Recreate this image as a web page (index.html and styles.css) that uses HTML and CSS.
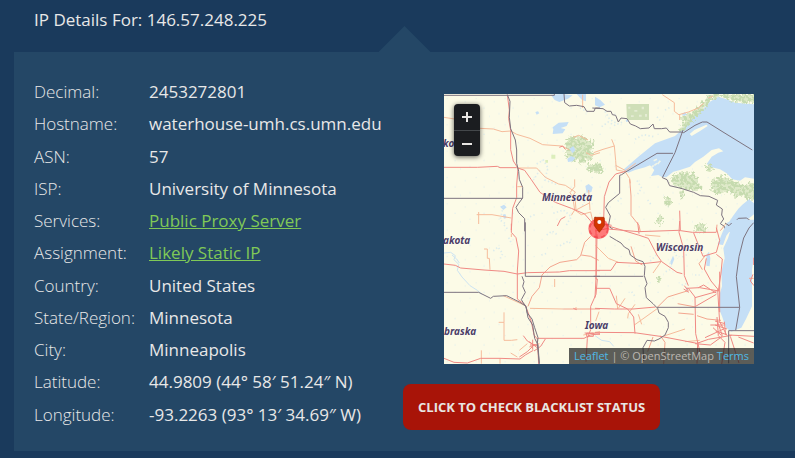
FILE: index.html
```html
<!DOCTYPE html>
<html lang="en">
<head>
<meta charset="utf-8">
<title>IP Details For: 146.57.248.225</title>
<meta name="viewport" content="width=device-width, initial-scale=1">
<link rel="stylesheet" href="styles.css">
</head>
<body>
<h1 class="title">IP Details For: 146.57.248.225</h1>
<main class="panel">
  <dl class="details">
    <dt>Decimal:</dt><dd>2453272801</dd>
    <dt>Hostname:</dt><dd>waterhouse-umh.cs.umn.edu</dd>
    <dt>ASN:</dt><dd>57</dd>
    <dt>ISP:</dt><dd>University of Minnesota</dd>
    <dt>Services:</dt><dd><a href="#proxy">Public Proxy Server</a></dd>
    <dt>Assignment:</dt><dd><a href="#static">Likely Static IP</a></dd>
    <dt>Country:</dt><dd>United States</dd>
    <dt>State/Region:</dt><dd>Minnesota</dd>
    <dt>City:</dt><dd>Minneapolis</dd>
    <dt>Latitude:</dt><dd>44.9809 (44° 58′ 51.24″ N)</dd>
    <dt>Longitude:</dt><dd>-93.2263 (93° 13′ 34.69″ W)</dd>
  </dl>
  <div class="side">
    <div class="map">
      <svg class="tiles" viewBox="0 0 930 810" aria-hidden="true">
        <defs>
          <pattern id="lakes" width="87" height="79" patternUnits="userSpaceOnUse">
            <path d="M8 12h3v3h-3zM31 40h5v3h-5zM62 21h3v4h-3zM48 66h3v3h-3zM76 58h4v3h-4z" fill="#cfe5f0" opacity=".55"/>
          </pattern>
          <filter id="ragged" x="-10%" y="-10%" width="120%" height="120%">
            <feTurbulence type="fractalNoise" baseFrequency=".12" numOctaves="2" seed="4" result="noise"/>
            <feDisplacementMap in="SourceGraphic" in2="noise" scale="26" xChannelSelector="R" yChannelSelector="G" result="edge"/>
            <feColorMatrix in="noise" values="0 0 0 0 1  0 0 0 0 1  0 0 0 0 .9  0 0 9 0 -4.2" result="clearings"/>
            <feComposite in="edge" in2="clearings" operator="out" result="dense"/>
            <feComponentTransfer in="edge" result="thin"><feFuncA type="linear" slope=".55"/></feComponentTransfer>
            <feMerge><feMergeNode in="thin"/><feMergeNode in="dense"/></feMerge>
          </filter>
        </defs>
        <rect width="930" height="810" fill="#fcfbe7"/>
        <rect width="930" height="810" fill="url(#lakes)"/>

        <!-- North-west: Minnesota and the Dakotas -->
        <g transform="translate(-12 -12)">
          <path class="woods" d="M378 165l6-24 18-4 6 8 20-10 10 14 18 2 4 20-10 8 12 14-10 16-18-2-2 14-16-2-4-12-14 8-6-16-16 4 2-18zM438 232l12-10 18 4 12-8v28l-26-2-14-4z"/>
          <path class="water" d="M332 14l36-2 30 4-14 10-26 10-14-6zM338 112l18-14 30-2-6 12-18 6 14 4-8 12-30 2 2-14zM388 176l12-8 6 12-8 10zM382 206l12-8 12 6-8 10-14 2zM436 288l10-6 12 10-4 14-14 2zM410 12h28v22l-12-4zM286 66l8-2 4 6-8 4zM180 350l12-6 8 8-10 8zM188 374l8-2 4 12-8 2z"/>
          <path d="M334 194h12v12h-12zM316 210h8v8h-8z" fill="#dceebb"/>
          <path class="lake-dust" d="M290 222l20-12 14 24-10 36 38 14M190 350l-10 40 20 14M340 370l30-10 24 20-18 30M410 320l26 8-10 22M420 54l24 12M270 380l20-8M300 240l-20 30"/>
          <path class="minor" d="M12 82l38 6M120 115l40 2 26 8 26-2 18 10 40 12 38 19 58 4 22 12M400 142l16-6 28 14M438 188l16 8 26-8M232 234h58l26 28 40 20 20 4 30 20-8 12 6 42-10 16M404 268v22l-14 18 16 26 2 26 42-22M116 366v36M110 374h46l58 10M232 290h16M404 360l20 14 28-8 8 34M428 14v40M446 300l4 60"/>
          <path class="major" d="M202 14l6 46-2 26 6 35v58l8 34 14 22-4 50v38l-12 32-4 65M12 232h100l60-3 8 4h50l24 8 20 28 26 38 46 30 48 18 40 17 26 30 20 18M352 408l10-20 14-8M358 172l10-4 8 10"/>
          <path class="border" d="M12 16h331v-4M372 12l2 26 14 10 22-2 22 4 8 14 22 0 4-10 14 0M12 325h235M202 14l8 20-2 48 4 34 14 34 4 30v40l6 24 2 24 10 24v32l-12 16-8 12 8 16 18 18v38"/>
        </g>

        <!-- North-east: Lake Superior and Ontario -->
        <g transform="translate(453 -12)">
          <path d="M94 42h68v48h-66z" fill="#cfdfb8"/>
          <path d="M100 50h6v6h-6zM118 60h9v5h-9zM140 50h7v8h-7zM108 76h8v5h-8zM132 74h8v6h-8zM150 72h6v8h-6z" fill="#e4ecd3"/>
          <path class="water" d="M84 240L130 200 180 160 240 138 262 118 285 90 318 64 345 35 370 20 395 28 420 38 490 44V268L450 262 435 272 412 268 395 250 375 238 350 232 335 222 350 200 370 188 385 184 372 175 350 180 325 200 300 216 285 230 255 240 235 245 214 262 202 262 190 255 168 258 178 240 165 226 150 232 120 240 100 248z"/>
          <path d="M284 132l14-12 36-16 4 4-24 16-24 14z" fill="#fcfbe7"/>
          <path class="woods" d="M340 12h150v28l-70-4-24-12-24-6-24 14-20 20-14 14-14 24-14 4 10-30 14-14 20-20zM330 30l12 6-22 30-28 26-20 26-22 4 14-22-6-22 26-8 28-8z"/>
          <path class="woods" d="M-4 224l24-6 4 34-28-2zM208 322h20v24h-20zM184 384l12-8 10 8-10 18-14 4z"/>
          <path class="woods" d="M226 262l22-12 24-4 24 6 18 12-4 14 10 14-14 10-26-4-22-4-26-12zM254 302l14 4-4 22-12-8zM332 232l14-12 8 18-12 10zM346 274l22-14 26-2 20 16 22 4 12 12 22-14 16 10v44l-30 0-14-14-20 8-20-20-34 8-18-10z"/>
          <path class="water" d="M396 406l18-28 16-22 12-12 20-16 18 14v28l-24 20-20 24-18 12h-24zM0 20l16 10 14 14-16 8-14-6zM92 90l6-2 4 6-8 2zM260 72l10-6 6 8-10 4z"/>
          <path class="lake-dust" d="M20 110l20-14 18 10 30-12M120 148l26-14 30 6M30 64l14 24 24 14M126 272l14 22-12 18M68 334l14-12M158 330l12 16M186 80l10 12M210 60l20-10"/>
          <path d="M168 234l8-8M178 226l8-6M188 222l8-10M176 212l10-4" fill="none" stroke="#f2f5e8" stroke-width="5"/>
          <path class="minor" d="M202 14l36 24v26l16 12 0 14M252 74l28-8 30-12 16-14M-4 188l28-10 34-10-8-20M58 168l4 44 2 28 22 4M62 226l30 16 30-22M90 244l14 22 2 14M384 410l8-8M340 24l14-6"/>
          <path class="major" d="M92 244l-30 8-20 24-14 44-2 72-10 26M254 362l2 58M20 400l30 6"/>
          <path class="medium" d="M104 268l4 50v58l24 30 4 20M366 404l-2 22M386 410l-10 12"/>
          <path class="border" d="M-8 54l32 2 12 8 12 0 4 10 10 2 8 20 8-12 18 2 10 16 16 6 14 8 26-2 12-12 4 14 22 0 14-2 10 12h34l8 2 34-22 22-10 14 0 48 30 88 54M264 120l-24 68-38 75 14 6 8 18 34 8 38 12 20 10 26 2 26 12-4 14 18 12-2 18 6 12-10 14 12 8 4 14 6-2 10-14 22-22 24-1 22 14M234 190h-48l-94 56-12 8-6 2v54l-34 28-8 14 14 26-6 30 14 10M477 400l-12 20"/>
        </g>

        <!-- South-west: Nebraska and Iowa -->
        <g transform="translate(-12 393)">
          <path class="river" d="M12 84l20-2 14 10-4 12 14 14-4 18 14 20 24 26 22 14 14 12M36 90l14 12 8 12"/>
          <path class="lake-dust" d="M160 78l14-12 14 20-8 16M206 38l10 20M192 0l12 14M320 30l16-12 14 10M360 62l26-14 8 10M304 90l20-6"/>
          <path class="minor" d="M214 26v10M132 72h10v28h6l2 34M344 162v24M270 250l100 2M408 246v8M176 292h16v54h22l18-2M192 262v30M124 376v40M180 400v16M238 376l24-20M430 330l50-10M212 384l20 12M190 212l44 20 18 8"/>
          <path class="medium" d="M264 244l12-30 22-26 8-38 24-24 30-14 50-8 14-14 28 4 24 12M422 92l12-40 18-18M268 366l30-10M370 252h110"/>
          <path class="major" d="M12 117l34 4 16 8 70 6 60 4 40 8 30-4 96-2 30-4h92M214-4v26l14 16 8 40-4 60v84l24 18 18 50 8 40 10 12 4 75M12 400l30 12 40 2 40-14h58l60 2 16-12 24-14M292 340h140l20-10 28-4M468 0v162l4 0-4 46-16 36v70l-10 26-4 70M250 332l12 16 16 10 16 4M316 342l-14 22-20 14M238 396l24-16 22-22M400 250l10 4M434 324l46 4"/>
          <path class="major" d="M268 350l26 20M270 360h22M278 344v30M440 324h20v10h-20z"/>
          <path class="border" d="M12 202h104l36 18 8-6 40-2 20 10 20 10 18 12 4 20 14 18 8 26 10 30-2 18 6 60M256-8v162h224M246 154l6 16-4 14 8 18-12 22 14 22 6 32 14 22 6 40 10 20 4 56"/>
        </g>

        <!-- South-east: Wisconsin and Lake Michigan -->
        <g transform="translate(453 393)">
          <path class="woods" d="M302-2h30v22l-16 4-18-10zM188 152l8 4-2 20-10-10z"/>
          <path class="water" d="M416-16h61v110l-6 40 0 110-18 38-14 26-30 12-16-12-12-34-8-20 2-50 6-20-2-44 10-40-4-30 14-30zM368 58l16-40 14-26 28-8-14 24-18 24-10 28zM334 90l8-10 4 20-2 24-10-2zM272 186l8 4-4 8zM226 110l8-18 4 10-8 20z"/>
          <path class="lake-dust" d="M212 140l16-8-4-24M238 80l10 20M262 96l20-10M184 90l-20 20M110 200l10 14M260 180l20-6M330 96l-6-12M300 150l14 0"/>
          <path class="river" d="M0 332l20 14 24 4 12 14"/>
          <path class="minor" d="M64 212l4 40M150 30l46 4M118 300l70-50M120 238l-20 28-2 14M70 250l20-30M210 332l60-20M0 60l40 40 30 12M174 144l24-34M130 268l10 30M12 260l-10 28M270 350l44-4"/>
          <path class="medium" d="M188 246l30-30 58-18M332 90l-20 26 10 18M248 236l54 10M250 264l46 4M306 272l30 10 42 4M196 332l14 20-4 66M174 336l-16 44M142 120l-20-12-14-44M462 160h14"/>
          <path class="major" d="M0 18l40-8M40 12l90 8 120-4 42 6 72 0M10-10l40 16 80 24 30 10 26 50 14 20 46 32 16 4M254-12l-2 34 14 50 2 80 12 30M128-8l4 34M0 136h48l16-24 80 4 54-6M6 28l-2 110-4 80M0 190l44 0 20 46 34 16 18 24 4 50M280 190l20 26 2 110 14 60M274 190l40-2 58 10M310 188l16-8 24 16 14 8M334 100l-6 32 20 36 20 24 4 70 2 28 22 42M364 8l10 38-10 36-40 12-28-70M364 88l18 14-4 42-8 54M0 250l58 2 56 0 68-6M0 322l118 1 84 12 104 20 34-12 70-12M308 350l-2 66M300 356l46 4 36-26M346 300l40 0M366 276l4 56 20 20-10 66M330 338l56-26M402 330l75 4M430 336l46 18M406 334l26 80M476 98v22M474 148l-8 20 11 14M374 140v122M300 218l64-18M302 244l62-36"/>
          <path class="major" d="M360 288l30 8M360 300l36 12M362 318l30 10M366 286l16 46M388 290l4 40M354 308l26 24M266 192l16 10M268 182l12 16"/>
          <path class="border" d="M-4 154h149M44 34l20 12 14 8 10 12 14 8 4 16 20 14 18 6 6 14-2 28 8 24-6 12 4 30 20 18 14 14 4 14 18 10 10 18v16l-10 22-18 12-14 6-22-2-12 22 2 40M186 247h248M434 247l-10-92 8-60 14-56 16-30 14-16M434 247l-12 69M477 317h-76v98M390-6l12 8 8-8"/>
        </g>
        <circle cx="464" cy="404" r="31" fill="#ff2531" fill-opacity=".6"/>
        <circle cx="464" cy="404" r="27" fill="none" stroke="#f0414a" stroke-width="5" stroke-dasharray="13 9" opacity=".7"/>
        <path d="M452 370h26q3 0 3 3v22l-15 20-15-20v-22q0-3 3-3z" fill="#d23600" stroke="#a92600" stroke-width="2"/>
        <circle cx="466" cy="384" r="6" fill="#fff"/>
      </svg>
      <span class="place minnesota">Minnesota</span>
      <span class="place wisconsin">Wisconsin</span>
      <span class="place iowa">Iowa</span>
      <span class="place north-dakota">ko</span>
      <span class="place south-dakota">akota</span>
      <span class="place nebraska">braska</span>
      <div class="zoom">
        <button type="button" aria-label="Zoom in"><svg viewBox="0 0 12 12"><path d="M6 1v10M1 6h10"/></svg></button>
        <button type="button" aria-label="Zoom out"><svg viewBox="0 0 12 12"><path d="M1 6h10"/></svg></button>
      </div>
      <div class="credit"><a href="#leaflet">Leaflet</a> | © OpenStreetMap <a href="#terms">Terms</a></div>
    </div>
    <button type="button" class="check">CLICK TO CHECK BLACKLIST STATUS</button>
  </div>
</main>
</body>
</html>
```
FILE: styles.css
```css
* { box-sizing: border-box; }

body {
  margin: 0;
  padding: 0 0 7px 14px;
  background: #1a3a5c;
  color: #e8e8e8;
  font: 17px/32px "Open Sans", "Noto Sans", sans-serif;
}

.title {
  margin: 0;
  padding: 4px 20px 16px;
  font-size: 17px;
  font-weight: 400;
}

.panel {
  position: relative;
  display: grid;
  grid-template-columns: 389px minmax(0, 1fr);
  padding: 24px 0 20px;
  background: #244766;
}

.panel::before {
  content: "";
  position: absolute;
  left: 50%;
  bottom: 100%;
  width: 52px;
  height: 26px;
  transform: translateX(-50%);
  background: #244766;
  clip-path: polygon(50% 0, 100% 100%, 0 100%);
}

.details {
  display: grid;
  grid-template-columns: 115px 1fr;
  grid-auto-rows: 1fr;
  height: 355px;
  margin: 0;
  padding-left: 20px;
  white-space: nowrap;
}

.details dt { font-weight: 300; }
.details dd { margin: 0; }
.details a { color: #80c957; }

.side { padding-top: 18px; }

.map {
  position: relative;
  margin: 0 41px 20px;
  overflow: hidden;
}

.tiles {
  display: block;
  width: 100%;
  height: auto;
}

.tiles path { stroke-linejoin: round; }
.tiles .woods { fill: #c6dbaf; filter: url(#ragged); }
.tiles .water { fill: #c5dff6; }
.tiles .border { fill: none; stroke: #7d7480; stroke-width: 3; }
.tiles .major { fill: none; stroke: #f08a84; stroke-width: 3; }
.tiles .medium { fill: none; stroke: #f3a68f; stroke-width: 3; }
.tiles .minor { fill: none; stroke: #f6bc9c; stroke-width: 3; }
.tiles .river { fill: none; stroke: #cde4f2; stroke-width: 3; }
.tiles .lake-dust { fill: none; stroke: #cfe5ef; stroke-width: 5; stroke-dasharray: 4 7; opacity: .7; }

.place {
  position: absolute;
  color: #4d3f66;
  font: italic 700 10px/14px "Noto Sans", sans-serif;
  text-shadow: 0 0 2px #fff;
}

.minnesota { left: 98px; top: 96px; }
.wisconsin { left: 212px; top: 146px; }
.iowa { left: 141px; top: 224px; }
.north-dakota { left: -1px; top: 42px; }
.south-dakota { left: -1px; top: 139px; }
.nebraska { left: 0; top: 230px; }

.zoom {
  position: absolute;
  left: 10px;
  top: 10px;
  width: 26px;
  border-radius: 4px;
  overflow: hidden;
  background: #1b1d20;
  box-shadow: 0 1px 5px rgba(0, 0, 0, .65);
}

.zoom button {
  display: flex;
  align-items: center;
  justify-content: center;
  width: 26px;
  height: 26px;
  padding: 0;
  border: 0;
  background: none;
}

.zoom button + button { border-top: 1px solid #44484b; }
.zoom svg { width: 12px; height: 12px; fill: none; stroke: #e8e6e3; stroke-width: 2; }

.credit {
  position: absolute;
  right: 0;
  bottom: 0;
  padding: 0 5px;
  background: rgba(24, 26, 27, .7);
  color: #bcb8b2;
  font-size: 11px;
  line-height: 16px;
  white-space: nowrap;
}

.credit a { color: #4fb9e6; text-decoration: none; }

.check {
  padding: 12px 15px;
  border: 0;
  border-radius: 8px;
  background: #a81408;
  color: #e8e6e3;
  font: 700 13px/22px "Open Sans", sans-serif;
  white-space: nowrap;
}
```
